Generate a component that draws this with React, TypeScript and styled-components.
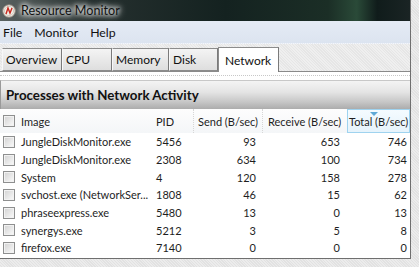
import React from 'react';
import styled, { createGlobalStyle } from 'styled-components';

const Global = createGlobalStyle`
  html, body { margin: 0; padding: 0; }
  body {
    width: 419px; height: 267px; overflow: hidden;
    background: repeating-linear-gradient(45deg, #ececec 0 1px, #e2e2e2 1px 2px);
    font-family: Lato, "Noto Sans", sans-serif;
  }
`;

const Window = styled.div`
  width: 411px; height: 259px; box-sizing: border-box;
  border-right: 1px solid #6f6f6f; border-bottom: 1px solid #6f6f6f;
  display: flex; flex-direction: column; background: #fff;
`;

const TitleBar = styled.div`
  height: 21px; display: flex; align-items: center; gap: 5px; padding-left: 2px;
  background: linear-gradient(90deg, #5a6261 0%, #26302f 22%, #142220 55%, #1b2e26 80%, #2a4a38 87%, #101c1b 92%, #1a2424 100%);
`;

const TitleText = styled.span`
  font-size: 12.6px; color: #111;
  text-shadow: 0 0 4px #fff, 0 0 6px #fff, 0 0 8px rgba(255,255,255,0.9);
`;

const MenuBar = styled.div`
  height: 23px; display: flex; align-items: center; gap: 12px; padding-left: 3px;
  background: linear-gradient(#e5ebf5, #dce4f0);
  border-bottom: 1px dotted #f4f6fa;
  box-sizing: border-box;
`;

const MenuItem = styled.span`
  font-size: 12.3px; color: #111;
`;

const TabStrip = styled.div`
  height: 28px; display: flex; align-items: flex-end; padding-left: 2px;
  background: repeating-linear-gradient(45deg, #efefef 0 1px, #e6e6e6 1px 2px);
  border-bottom: 1px solid #8a8a8a; box-sizing: border-box;
`;

const Tab = styled.div<{ $w: number; $active?: boolean }>`
  width: ${p => p.$w}px; box-sizing: border-box;
  height: ${p => (p.$active ? 25 : 23)}px;
  margin-bottom: ${p => (p.$active ? -1 : 0)}px;
  padding-left: ${p => (p.$active ? 6 : 3)}px;
  display: flex; align-items: center;
  font-size: 12px; color: #111;
  background: ${p => (p.$active ? '#fff' : 'linear-gradient(#f4f4f4, #dedede)')};
  border: 1px solid #8c8c8c;
  border-bottom: ${p => (p.$active ? 'none' : '1px solid #8c8c8c')};
  border-left: ${p => (p.$active ? '1px solid #8c8c8c' : '1px solid #f8f8f8')};
  border-right: 1px solid #7a7a7a;
`;

const Panel = styled.div`
  flex: 1; display: flex; flex-direction: column; padding-top: 3px; background: #fff;
`;

const Rule = styled.div`
  height: 0; border-top: 1px dotted #c8c8c8; margin-bottom: 4px;
`;

const SectionHeader = styled.div`
  height: 29px; display: flex; align-items: center; padding-left: 5px;
  font-size: 13.3px; font-weight: 700; color: #111;
  background: linear-gradient(#f4f4f4 0%, #e4e4e4 40%, #c6c6c6 75%, #acacac 100%);
  border-top: 1px solid #c8c8c8; border-left: 1px solid #9a9a9a;
  box-sizing: border-box;
`;

const Grid = styled.div`
  display: grid;
  grid-template-columns: 19px 131px 44px 69px 84px 1fr;
`;

const HeadRow = styled(Grid)`
  height: 24px; align-items: stretch;
  background: linear-gradient(#fdfdfd, #f4f6f8);
`;

const HeadCell = styled.div<{ $pad?: number; $sorted?: boolean; $sep?: boolean }>`
  display: flex; align-items: center; padding-left: ${p => p.$pad ?? 5}px;
  font-size: 11px; color: #1e1e1e; white-space: nowrap; position: relative;
  border-right: ${p => (p.$sep ? '1px dotted #d6d6d6' : 'none')};
  ${p => p.$sorted ? 'border: 1px solid #9fd3ef; background: linear-gradient(#f4fbff, #e6f3fb); padding-left: 1px;' : ''}
`;

const SortArrow = styled.span`
  position: absolute; top: 2px; left: 22px;
  width: 0; height: 0;
  border-left: 4px solid transparent; border-right: 4px solid transparent;
  border-top: 4px solid #5fa9d6;
`;

const Row = styled(Grid)`
  height: 17.7px; align-items: center;
`;

const Cell = styled.div<{ $num?: boolean; $pad?: number }>`
  font-size: 11px; color: #1e1e1e; white-space: nowrap; overflow: hidden;
  text-align: ${p => (p.$num ? 'right' : 'left')};
  padding-left: ${p => (p.$num ? 0 : p.$pad ?? 2)}px;
  padding-right: ${p => (p.$num ? p.$pad ?? 7 : 0)}px;
`;

const CheckBox = styled.span`
  display: block; width: 12px; height: 12px; box-sizing: border-box; margin-left: 3px;
  border: 1px solid #8e8f8f;
  background: linear-gradient(135deg, #d2d2d2 0%, #e6e6e6 50%, #fbfbfb 100%);
  box-shadow: inset 0 0 0 1px #f2f2f2;
`;

const rows = [
  ['JungleDiskMonitor.exe', '5456', '93', '653', '746'],
  ['JungleDiskMonitor.exe', '2308', '634', '100', '734'],
  ['System', '4', '120', '158', '278'],
  ['svchost.exe (NetworkSer...', '1808', '46', '15', '62'],
  ['phraseexpress.exe', '5480', '13', '0', '13'],
  ['synergys.exe', '5212', '3', '5', '8'],
  ['firefox.exe', '7140', '0', '0', '0'],
];

const AppIcon = () => (
  <svg width="14" height="14" viewBox="0 0 14 14">
    <circle cx="7" cy="7" r="6.3" fill="#f2eee6" stroke="#8a8078" strokeWidth="1" />
    <circle cx="7" cy="7" r="4.6" fill="none" stroke="#c8c0b4" strokeWidth="0.8" />
    <path d="M4 10 L6 4 L8 9 L10 4" fill="none" stroke="#c8281e" strokeWidth="1.4" />
  </svg>
);

export default function App() {
  return (
    <>
      <Global />
      <Window>
        <TitleBar>
          <AppIcon />
          <TitleText>Resource Monitor</TitleText>
        </TitleBar>
        <MenuBar>
          <MenuItem>File</MenuItem>
          <MenuItem>Monitor</MenuItem>
          <MenuItem>Help</MenuItem>
        </MenuBar>
        <TabStrip>
          <Tab $w={60}>Overview</Tab>
          <Tab $w={50}>CPU</Tab>
          <Tab $w={57}>Memory</Tab>
          <Tab $w={49}>Disk</Tab>
          <Tab $w={61} $active>Network</Tab>
        </TabStrip>
        <Panel>
          <Rule />
          <SectionHeader>Processes with Network Activity</SectionHeader>
          <HeadRow>
            <HeadCell $pad={0}><CheckBox /></HeadCell>
            <HeadCell $pad={2}>Image</HeadCell>
            <HeadCell $pad={6} $sep>PID</HeadCell>
            <HeadCell $pad={4} $sep>Send (B/sec)</HeadCell>
            <HeadCell $pad={5}>Receive (B/sec)</HeadCell>
            <HeadCell $sorted>Total (B/sec)<SortArrow /></HeadCell>
          </HeadRow>
          {rows.map((r, i) => (
            <Row key={i}>
              <CheckBox />
              <Cell>{r[0]}</Cell>
              <Cell $pad={6}>{r[1]}</Cell>
              <Cell $num>{r[2]}</Cell>
              <Cell $num>{r[3]}</Cell>
              <Cell $num $pad={3}>{r[4]}</Cell>
            </Row>
          ))}
        </Panel>
      </Window>
    </>
  );
}
